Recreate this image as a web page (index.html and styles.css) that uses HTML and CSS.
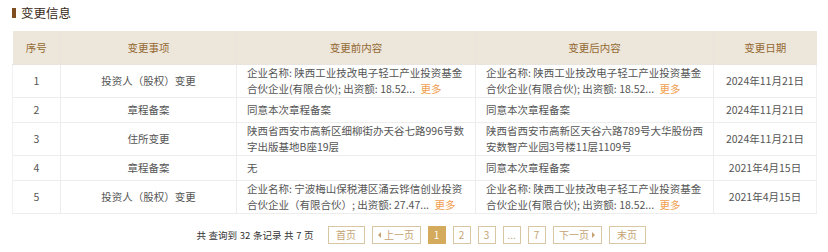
FILE: index.html
```html
<!DOCTYPE html>
<html lang="zh">
<head>
<meta charset="utf-8">
<link rel="stylesheet" href="styles.css">
</head>
<body>
<div class="panel">
  <h2 class="title"><span class="mark"></span>变更信息</h2>
  <table class="grid">
    <colgroup>
      <col class="c-no"><col class="c-item"><col class="c-before"><col class="c-after"><col class="c-date">
    </colgroup>
    <thead>
      <tr><th>序号</th><th>变更事项</th><th>变更前内容</th><th>变更后内容</th><th>变更日期</th></tr>
    </thead>
    <tbody>
      <tr>
        <td class="ctr">1</td>
        <td class="ctr">投资人（股权）变更</td>
        <td>企业名称: 陕西工业技改电子轻工产业投资基金合伙企业(有限合伙); 出资额: 18.52... <a class="more">更多</a></td>
        <td>企业名称: 陕西工业技改电子轻工产业投资基金合伙企业(有限合伙); 出资额: 18.52... <a class="more">更多</a></td>
        <td class="ctr">2024年11月21日</td>
      </tr>
      <tr>
        <td class="ctr">2</td>
        <td class="ctr">章程备案</td>
        <td>同意本次章程备案</td>
        <td>同意本次章程备案</td>
        <td class="ctr">2024年11月21日</td>
      </tr>
      <tr>
        <td class="ctr">3</td>
        <td class="ctr">住所变更</td>
        <td>陕西省西安市高新区细柳街办天谷七路996号数字出版基地B座19层</td>
        <td>陕西省西安市高新区天谷六路789号大华股份西安数智产业园3号楼11层1109号</td>
        <td class="ctr">2024年11月21日</td>
      </tr>
      <tr>
        <td class="ctr">4</td>
        <td class="ctr">章程备案</td>
        <td>无</td>
        <td>同意本次章程备案</td>
        <td class="ctr">2021年4月15日</td>
      </tr>
      <tr>
        <td class="ctr">5</td>
        <td class="ctr">投资人（股权）变更</td>
        <td>企业名称: 宁波梅山保税港区涌云铧信创业投资合伙企业（有限合伙）; 出资额: 27.47... <a class="more">更多</a></td>
        <td>企业名称: 陕西工业技改电子轻工产业投资基金合伙企业(有限合伙); 出资额: 18.52... <a class="more">更多</a></td>
        <td class="ctr">2021年4月15日</td>
      </tr>
    </tbody>
  </table>
  <div class="pager">
    <span class="summary">共 查询到 32 条记录 共 7 页</span>
    <a class="btn wide">首页</a>
    <a class="btn wider"><span class="tri-l"></span>上一页</a>
    <a class="btn num active">1</a>
    <a class="btn num">2</a>
    <a class="btn num">3</a>
    <a class="btn num">...</a>
    <a class="btn num">7</a>
    <a class="btn wider">下一页<span class="tri-r"></span></a>
    <a class="btn wide">末页</a>
  </div>
</div>
</body>
</html>
```
FILE: styles.css
```css
* { box-sizing: border-box; }
html, body { margin: 0; padding: 0; background: #ffffff; }
body {
  font-family: "PingFang SC", "Noto Sans CJK SC", "Liberation Sans", sans-serif;
  color: #555;
}
.panel { padding: 4px 12px 0 12px; width: 828px; }
.title {
  margin: 0;
  display: flex;
  align-items: center;
  gap: 5px;
  font-size: 12.5px;
  font-weight: normal;
  color: #3a2a18;
  height: 18px;
  line-height: 18px;
}
.mark { display: inline-block; width: 4px; height: 10px; background: #7d4e1f; }
.grid {
  margin-top: 9px;
  width: 804px;
  border-collapse: collapse;
  table-layout: fixed;
  font-size: 10.5px;
}
.c-no { width: 48px; }
.c-item { width: 176px; }
.c-before { width: 239px; }
.c-after { width: 238px; }
.c-date { width: 103px; }
.grid th {
  background: #ede6db;
  color: #946a33;
  font-weight: normal;
  height: 33px;
  border: 1px solid #e9e4dd;
  border-top: none;
  text-align: center;
}
.grid th:first-child { border-left: none; }
.grid th:last-child { border-right: none; }
.grid td {
  border: 1px solid #ededed;
  height: 25px;
  padding: 0 9px 0 10px;
  line-height: 16px;
  color: #555;
  vertical-align: middle;
}
.grid td:first-child { border-left: 1px solid #f1f1f1; }
.grid td:last-child { border-right: 1px solid #f1f1f1; }
.grid td.ctr { text-align: center; padding: 0 4px; }
.more { color: #f0a050; margin-left: 3px; }
.pager {
  display: flex;
  align-items: center;
  justify-content: center;
  gap: 7px;
  margin-top: 12px;
  padding-left: 14px;
  font-size: 10px;
}
.summary { color: #333; margin-right: 7px; font-size: 9.5px; word-spacing: 0.5px; }
.btn {
  height: 18px;
  border: 1px solid #d9c7a4;
  color: #c4a373;
  display: inline-flex;
  align-items: center;
  justify-content: center;
  gap: 3px;
  background: #fff;
}
.btn.wide { width: 37px; }
.btn.wider { width: 49px; }
.btn.num { width: 18px; }
.btn.active { background: #d4aa5c; border-color: #d4aa5c; color: #fff; }
.tri-l, .tri-r { width: 0; height: 0; border-top: 3px solid transparent; border-bottom: 3px solid transparent; }
.tri-l { border-right: 3px solid #c4a373; }
.tri-r { border-left: 3px solid #c4a373; }
```
